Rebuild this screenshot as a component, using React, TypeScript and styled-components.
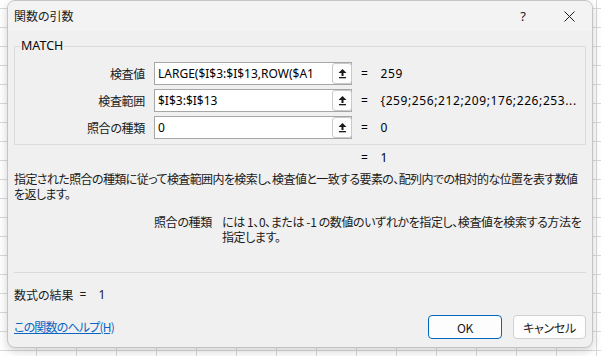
import styled, { createGlobalStyle } from 'styled-components'

const GlobalStyle = createGlobalStyle`
    html, body {
        margin: 0;
        height: 100%;
    }

    body {
        background-color: #ffffff;
        background-image:
            linear-gradient(#d9d9d9 1px, transparent 1px),
            linear-gradient(90deg, #d9d9d9 1px, transparent 1px);
        background-size: 40px 19px;
        background-position: 36px 8px;
        font-family: "Noto Sans CJK JP", "Noto Sans", sans-serif;
        font-feature-settings: "palt";
        font-size: 12px;
        color: #1a1a1a;
    }
`

const Page = styled.div`
    padding-left: 7px;
`

const Dialog = styled.div`
    width: 586px;
    height: 348px;
    box-sizing: border-box;
    border: 1px solid #c4c4c4;
    border-radius: 8px;
    background: #f0f0f0;
    box-shadow: 0 3px 10px rgba(0, 0, 0, 0.18);
    overflow: hidden;
    display: flex;
    flex-direction: column;
`

const TitleBar = styled.div`
    height: 30px;
    display: flex;
    align-items: center;
    padding-left: 6px;
    background: #f3f3f3;
`

const Title = styled.div`
    flex: 1;
    line-height: 16px;
`

const TitleButton = styled.div`
    width: 46px;
    height: 30px;
    display: flex;
    align-items: center;
    justify-content: center;
    font-family: "Noto Sans", sans-serif;
    font-size: 13px;
`

const Body = styled.div`
    flex: 1;
    display: flex;
    flex-direction: column;
    padding: 0 6px 0 6px;
`

const ArgGroup = styled.fieldset`
    margin: 7px 0 0 0;
    padding: 8px 0 5px 0;
    border: 1px solid #dcdcdc;
    display: flex;
    flex-direction: column;
    gap: 4px;

    legend {
        margin-left: 5px;
        padding: 0 1px;
        line-height: 16px;
        font-family: "Noto Sans", sans-serif;
        font-size: 12.5px;
        color: #0a0a0a;
    }
`

const ArgRow = styled.div`
    display: flex;
    align-items: center;
    height: 23px;
`

const ArgLabel = styled.div`
    width: 130px;
    flex-shrink: 0;
    text-align: right;
    line-height: 16px;
    letter-spacing: -0.3px;
`

const RefInput = styled.div`
    margin-left: 9px;
    width: 198px;
    height: 23px;
    flex-shrink: 0;
    box-sizing: border-box;
    border: 1px solid #a6a6a6;
    background: #ffffff;
    display: flex;
    align-items: center;
`

const RefText = styled.div`
    flex: 1;
    overflow: hidden;
    white-space: nowrap;
    padding-left: 3px;
    font-family: "Noto Sans", sans-serif;
    font-size: 12px;
    line-height: 16px;
    color: #000;
`

const CollapseButton = styled.div`
    width: 20px;
    height: 21px;
    box-sizing: border-box;
    margin-right: -1px;
    border: 1px solid #c9c9c9;
    border-radius: 3px;
    background: #fdfdfd;
    display: flex;
    align-items: center;
    justify-content: center;
`

interface ValueProps {
    indent?: number
}

const ArgValue = styled.div<ValueProps>`
    margin-left: ${(p) => p.indent ?? 9}px;
    display: flex;
    gap: 12px;
    font-family: "Noto Sans", sans-serif;
    line-height: 16px;
    white-space: nowrap;
    letter-spacing: 0.6px;
    color: #000;
`

const ResultLine = styled.div`
    margin-top: 5px;
    display: flex;
`

const Description = styled.div`
    margin-top: 5px;
    line-height: 15px;
    white-space: nowrap;
    letter-spacing: -0.6px;
`

const ArgHelp = styled.div`
    margin-top: 13px;
    display: flex;
    line-height: 15px;
`

const ArgHelpName = styled.div`
    width: 198px;
    flex-shrink: 0;
    text-align: right;
    letter-spacing: -0.3px;
`

const ArgHelpText = styled.div`
    margin-left: 10px;
    white-space: nowrap;
    letter-spacing: -0.4px;
`

const Divider = styled.div`
    margin-top: 28px;
    height: 1px;
    background: #dadada;
`

const FormulaResult = styled.div`
    margin-top: 14px;
    line-height: 16px;
    display: flex;
`

const ResultEquals = styled.span`
    margin-left: 6px;
    font-family: "Noto Sans", sans-serif;
`

const ResultNumber = styled.span`
    margin-left: 12px;
    font-family: "Noto Sans", sans-serif;
`

const Footer = styled.div`
    margin-top: 12px;
    display: flex;
    align-items: center;
`

const HelpLink = styled.a`
    flex: 1;
    color: #0a66c2;
    text-decoration: underline;
    line-height: 16px;
    letter-spacing: -0.8px;
    cursor: pointer;
`

interface ButtonProps {
    primary?: boolean
}

const DialogButton = styled.button<ButtonProps>`
    width: ${(p) => (p.primary ? 74 : 73)}px;
    height: 24px;
    margin-left: ${(p) => (p.primary ? 0 : 11)}px;
    box-sizing: border-box;
    border: 1px solid ${(p) => (p.primary ? '#0067c0' : '#d0d0d0')};
    border-radius: 4px;
    background: #fdfdfd;
    font-family: "Noto Sans CJK JP", sans-serif;
    font-feature-settings: "palt";
    font-size: 12px;
    letter-spacing: -0.3px;
    color: #1a1a1a;
    padding: 0;
`

const UpArrowIcon = () => (
    <svg width="11" height="11" viewBox="0 0 11 11">
        <path d="M5.5 1 L1.5 5 H4.5 V8 H6.5 V5 H9.5 Z" fill="#1a1a1a"/>
        <rect x="2" y="9" width="7" height="1.3" fill="#1a1a1a"/>
    </svg>
)

const CloseIcon = () => (
    <svg width="11" height="11" viewBox="0 0 11 11">
        <path d="M0.5 0.5 L10.5 10.5 M10.5 0.5 L0.5 10.5" stroke="#1a1a1a" strokeWidth="1"/>
    </svg>
)

const args = [
    { label: '検査値', ref: 'LARGE($I$3:$I$13,ROW($A1', value: '259' },
    { label: '検査範囲', ref: '$I$3:$I$13', value: '{259;256;212;209;176;226;253...' },
    { label: '照合の種類', ref: '0', value: '0' },
]

const App = () => {
    return (
        <Page>
            <GlobalStyle/>
            <Dialog>
                <TitleBar>
                    <Title>関数の引数</Title>
                    <TitleButton>?</TitleButton>
                    <TitleButton><CloseIcon/></TitleButton>
                </TitleBar>

                <Body>
                    <ArgGroup>
                        <legend>MATCH</legend>
                        {
                            args.map((arg, index) => (
                                <ArgRow key={index}>
                                    <ArgLabel>{arg.label}</ArgLabel>
                                    <RefInput>
                                        <RefText>{arg.ref}</RefText>
                                        <CollapseButton><UpArrowIcon/></CollapseButton>
                                    </RefInput>
                                    <ArgValue>
                                        <span>=</span>
                                        <span>{arg.value}</span>
                                    </ArgValue>
                                </ArgRow>
                            ))
                        }
                    </ArgGroup>

                    <ResultLine>
                        <ArgValue indent={347}>
                            <span>=</span>
                            <span>1</span>
                        </ArgValue>
                    </ResultLine>

                    <Description>
                        指定された照合の種類に従って検査範囲内を検索し、検査値と一致する要素の、配列内での相対的な位置を表す数値<br/>
                        を返します。
                    </Description>

                    <ArgHelp>
                        <ArgHelpName>照合の種類</ArgHelpName>
                        <ArgHelpText>
                            には 1、0、または -1 の数値のいずれかを指定し、検査値を検索する方法を<br/>
                            指定します。
                        </ArgHelpText>
                    </ArgHelp>

                    <Divider/>

                    <FormulaResult>
                        数式の結果
                        <ResultEquals>=</ResultEquals>
                        <ResultNumber>1</ResultNumber>
                    </FormulaResult>

                    <Footer>
                        <HelpLink>この関数のヘルプ(H)</HelpLink>
                        <DialogButton primary>OK</DialogButton>
                        <DialogButton>キャンセル</DialogButton>
                    </Footer>
                </Body>
            </Dialog>
        </Page>
    )
}

export default App
